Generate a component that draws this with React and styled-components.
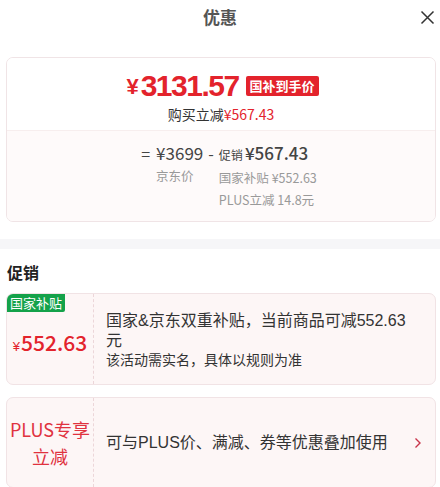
import React from "react";
import styled, { createGlobalStyle } from "styled-components";

const Global = createGlobalStyle`
  html, body { margin: 0; padding: 0; background: #fff; }
  body { font-family: "Noto Sans CJK SC", "Noto Sans", sans-serif; color: #333; }
  * { box-sizing: border-box; }
`;

const RED = "#e3232c";
const TIGHT = `"Liberation Sans", "Noto Sans CJK SC", sans-serif`;

const Page = styled.div`
  width: 440px;
  display: flex;
  flex-direction: column;
`;

const Header = styled.div`
  position: relative;
  height: 34px;
  display: flex;
  align-items: center;
  justify-content: center;
  margin-bottom: 23px;
`;

const Title = styled.div`
  font-size: 17px;
  font-weight: 700;
  color: #555;
  line-height: 34px;
`;

const Close = styled.button`
  position: absolute;
  right: 5px;
  top: 9px;
  width: 16px;
  height: 16px;
  padding: 0;
  border: 0;
  background: none;
  display: flex;
  align-items: center;
  justify-content: center;
`;

const Card = styled.div`
  margin: 0 4px 0 6px;
  border: 1px solid #f0e4e6;
  border-radius: 7px;
  overflow: hidden;
  background: #fff;
`;

const PriceTop = styled.div`
  padding: 11px 0 5px;
  display: flex;
  flex-direction: column;
  align-items: center;
  background: #fff;
  border-bottom: 1px solid #f7eeee;
`;

const PriceRow = styled.div`
  height: 34px;
  display: flex;
  align-items: center;
  color: ${RED};
  margin-left: 3px;
  font-family: ${TIGHT};
`;

const Yen = styled.span`
  font-family: ${TIGHT};
  font-size: ${(p) => p.$size || 18}px;
  font-weight: ${(p) => p.$weight || 700};
  margin-right: ${(p) => p.$gap || 1}px;
  position: relative;
  top: ${(p) => p.$shift || 0}px;
`;

const BigNum = styled.span`
  font-size: 30px;
  font-weight: 700;
  letter-spacing: -1.5px;
  line-height: 34px;
`;

const Badge = styled.span`
  margin-left: 7px;
  background: ${RED};
  color: #fff;
  font-family: "Noto Sans CJK SC", sans-serif;
  font-size: 13px;
  font-weight: 700;
  line-height: 20px;
  padding: 0 4px;
  border-radius: 2px;
`;

const SubLine = styled.div`
  font-size: 14px;
  line-height: 22px;
  color: #333;
`;

const Red = styled.span`
  color: ${RED};
`;

const PriceBottom = styled.div`
  background: #fefafa;
  padding: 10px 0;
  display: flex;
  justify-content: center;
  color: #444;
`;

const Formula = styled.div`
  display: flex;
  align-items: flex-start;
  margin-left: 10px;
`;

const Op = styled.div`
  font-size: 16px;
  line-height: 24px;
  padding: 0 ${(p) => p.$pad || 6}px;
  color: #444;
`;

const Col = styled.div`
  display: flex;
  flex-direction: column;
  align-items: flex-start;
`;

const Main = styled.div`
  font-size: 17px;
  line-height: 24px;
  color: #444;
  white-space: nowrap;
  font-weight: ${(p) => p.$weight || 400};
`;

const Small = styled.span`
  font-size: 12px;
  font-weight: 400;
  margin-right: 2px;
`;

const Note = styled.div`
  font-size: 12.5px;
  line-height: 22px;
  color: #999;
  white-space: nowrap;
`;

const Band = styled.div`
  height: 10px;
  background: #f6f6f8;
  margin-top: 17px;
`;

const Section = styled.div`
  font-size: 16px;
  font-weight: 700;
  color: #222;
  line-height: 22px;
  padding: 12px 0 0 7px;
  margin-bottom: 10px;
`;

const PromoCard = styled.div`
  position: relative;
  margin: 0 4px ${(p) => p.$mb || 0}px 6px;
  height: ${(p) => p.$h}px;
  border: 1px solid #f1e3e5;
  border-radius: 7px;
  background: #fdf6f6;
  display: flex;
  overflow: hidden;
`;

const Left = styled.div`
  width: 87px;
  flex: none;
  border-right: 1px dashed #ecd6d9;
  display: flex;
  flex-direction: column;
  align-items: center;
  justify-content: center;
  color: ${RED};
`;

const Tag = styled.div`
  position: absolute;
  left: 0;
  top: 0;
  background: #14a24a;
  color: #fff;
  font-size: 13px;
  line-height: 18px;
  padding: 0 3px;
  border-bottom-right-radius: 2px;
`;

const PromoPrice = styled.div`
  display: flex;
  align-items: baseline;
  margin-top: 6px;
`;

const PromoNum = styled.span`
  font-size: 21px;
  font-weight: 500;
`;

const PlusLabel = styled.div`
  font-size: 18px;
  line-height: 27px;
  text-align: center;
  color: #e0323f;
`;

const Right = styled.div`
  flex: 1;
  padding: ${(p) => p.$pt || 0}px ${(p) => p.$pr || 14}px 0 12px;
  display: flex;
  align-items: center;
  justify-content: space-between;
`;

const Texts = styled.div`
  display: flex;
  flex-direction: column;
  font-family: ${TIGHT};
`;

const Desc = styled.div`
  font-family: ${TIGHT};
  font-size: 16px;
  line-height: 20px;
  color: #333;
`;

const Hint = styled.div`
  font-size: 14px;
  line-height: 18px;
  color: #333;
`;

export default function App() {
  return (
    <>
      <Global />
      <Page>
        <Header>
          <Title>优惠</Title>
          <Close aria-label="关闭">
            <svg width="15" height="15" viewBox="0 0 15 15">
              <path d="M1.5 1.5 L13.5 13.5 M13.5 1.5 L1.5 13.5" stroke="#333" strokeWidth="1.5" fill="none" />
            </svg>
          </Close>
        </Header>

        <Card>
          <PriceTop>
            <PriceRow>
              <Yen $size={22} $gap={2} $shift={1}>¥</Yen>
              <BigNum>3131.57</BigNum>
              <Badge>国补到手价</Badge>
            </PriceRow>
            <SubLine>
              购买立减<Red>¥567.43</Red>
            </SubLine>
          </PriceTop>
          <PriceBottom>
            <Formula>
              <Op $pad={6}>=</Op>
              <Col>
                <Main>¥3699</Main>
                <Note>京东价</Note>
              </Col>
              <Op $pad={5}>-</Op>
              <Col>
                <Main $weight={500}>
                  <Small>促销</Small>¥567.43
                </Main>
                <Note>国家补贴 ¥552.63</Note>
                <Note>PLUS立减 14.8元</Note>
              </Col>
            </Formula>
          </PriceBottom>
        </Card>

        <Band />
        <Section>促销</Section>

        <PromoCard $h={92} $mb={12}>
          <Tag>国家补贴</Tag>
          <Left>
            <PromoPrice>
              <Yen $size={13} $weight={500} $gap={1}>¥</Yen>
              <PromoNum>552.63</PromoNum>
            </PromoPrice>
          </Left>
          <Right $pr={22} $pt={2}>
            <Texts>
              <Desc>国家&amp;京东双重补贴，当前商品可减552.63元</Desc>
              <Hint>该活动需实名，具体以规则为准</Hint>
            </Texts>
          </Right>
        </PromoCard>

        <PromoCard $h={91}>
          <Left>
            <PlusLabel>
              PLUS专享
              <br />
              立减
            </PlusLabel>
          </Left>
          <Right $pr={13}>
            <Desc>可与PLUS价、满减、券等优惠叠加使用</Desc>
            <svg width="8" height="12" viewBox="0 0 8 12">
              <path d="M1.5 1.5 L6 6 L1.5 10.5" stroke="#c8334a" strokeWidth="1.4" fill="none" />
            </svg>
          </Right>
        </PromoCard>
      </Page>
    </>
  );
}
